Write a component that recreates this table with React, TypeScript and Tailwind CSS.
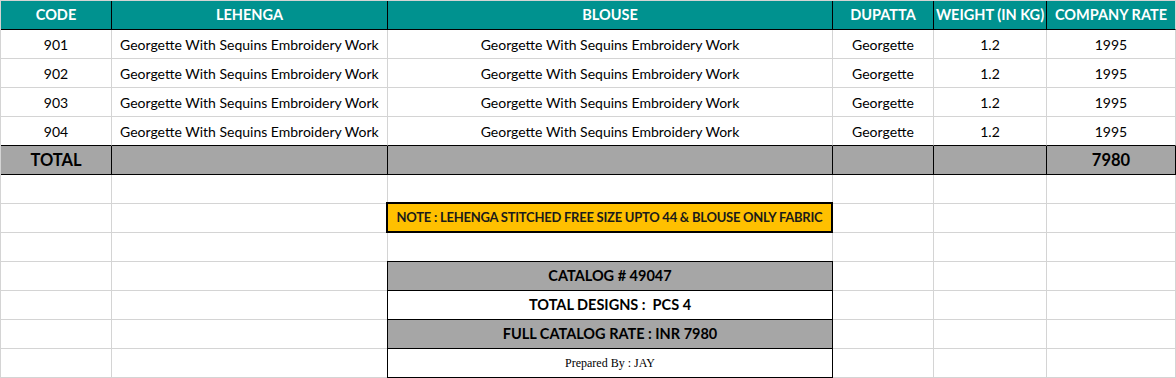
import type { ReactNode } from "react";
import clsx from "clsx";

type Line = "grid" | "dark";

type Item = {
  code: string;
  lehenga: string;
  blouse: string;
  dupatta: string;
  weight: string;
  rate: string;
};

const WORK = "Georgette With Sequins Embroidery Work";

const items: Item[] = [
  { code: "901", lehenga: WORK, blouse: WORK, dupatta: "Georgette", weight: "1.2", rate: "1995" },
  { code: "902", lehenga: WORK, blouse: WORK, dupatta: "Georgette", weight: "1.2", rate: "1995" },
  { code: "903", lehenga: WORK, blouse: WORK, dupatta: "Georgette", weight: "1.2", rate: "1995" },
  { code: "904", lehenga: WORK, blouse: WORK, dupatta: "Georgette", weight: "1.2", rate: "1995" }
];

const headers = ["CODE", "LEHENGA", "BLOUSE", "DUPATTA", "WEIGHT (IN KG)", "COMPANY RATE"];

function Cell({
  children,
  right = "grid",
  bottom = "grid",
  className
}: {
  children?: ReactNode;
  right?: Line;
  bottom?: Line;
  className?: string;
}) {
  return (
    <div
      className={clsx(
        "flex min-w-0 items-center justify-center whitespace-nowrap border-b border-r",
        right === "dark" ? "border-r-black" : "border-r-[#d4d4d4]",
        bottom === "dark" ? "border-b-black" : "border-b-[#d4d4d4]",
        className
      )}
    >
      {children}
    </div>
  );
}

function EmptyRow({ middle }: { middle?: ReactNode }) {
  return (
    <>
      <Cell />
      <Cell />
      {middle ?? <Cell />}
      <Cell />
      <Cell />
      <Cell />
    </>
  );
}

function CatalogCell({ children, shaded }: { children: ReactNode; shaded?: boolean }) {
  return (
    <div
      className={clsx(
        "-ml-px -mt-px flex items-center justify-center whitespace-pre border border-black text-[14.5px] font-bold text-black",
        shaded ? "bg-[#a6a6a6]" : "bg-white"
      )}
    >
      {children}
    </div>
  );
}

export default function App() {
  return (
    <div className="min-h-[378px] w-[1176px] bg-white font-[Lato,sans-serif] text-[14px] text-black">
      <div className="grid auto-rows-[29px] grid-cols-[111px_276px_445px_101px_113px_129px] border-l border-t border-[#d4d4d4]">
        {headers.map((label, i) => (
          <Cell
            key={label}
            right={i < headers.length - 1 ? "dark" : "grid"}
            bottom="dark"
            className="bg-[#00928f] text-[14.5px] font-bold text-white"
          >
            {label}
          </Cell>
        ))}

        {items.map((item, i) => {
          const bottom: Line = i === items.length - 1 ? "dark" : "grid";
          return (
            <div key={item.code} className="contents">
              <Cell bottom={bottom}>{item.code}</Cell>
              <Cell bottom={bottom} className="justify-start pl-[8px]">
                {item.lehenga}
              </Cell>
              <Cell bottom={bottom}>{item.blouse}</Cell>
              <Cell bottom={bottom}>{item.dupatta}</Cell>
              <Cell bottom={bottom}>{item.weight}</Cell>
              <Cell bottom={bottom}>{item.rate}</Cell>
            </div>
          );
        })}

        <Cell right="dark" bottom="dark" className="bg-[#a6a6a6] text-[16.5px] font-bold">
          TOTAL
        </Cell>
        <Cell right="dark" bottom="dark" className="bg-[#a6a6a6]" />
        <Cell right="dark" bottom="dark" className="bg-[#a6a6a6]" />
        <Cell right="dark" bottom="dark" className="bg-[#a6a6a6]" />
        <Cell right="dark" bottom="dark" className="bg-[#a6a6a6]" />
        <Cell right="dark" bottom="dark" className="bg-[#a6a6a6] text-[16.5px] font-bold">
          7980
        </Cell>

        <EmptyRow />
        <EmptyRow
          middle={
            <div className="-ml-[2px] -mt-[2px] flex items-center justify-center whitespace-nowrap border-2 border-black bg-[#ffc000] text-[13px] font-bold tracking-[-0.25px] text-[#1a1a1a]">
              NOTE : LEHENGA STITCHED FREE SIZE UPTO 44 &amp; BLOUSE ONLY FABRIC
            </div>
          }
        />
        <EmptyRow />
        <EmptyRow middle={<CatalogCell shaded>CATALOG # 49047</CatalogCell>} />
        <EmptyRow middle={<CatalogCell>{"TOTAL DESIGNS :  PCS 4"}</CatalogCell>} />
        <EmptyRow middle={<CatalogCell shaded>FULL CATALOG RATE : INR 7980</CatalogCell>} />
        <EmptyRow
          middle={
            <CatalogCell>
              <span className="font-['Liberation_Serif',serif] text-[12px] font-normal">Prepared By : JAY</span>
            </CatalogCell>
          }
        />
      </div>
    </div>
  );
}
